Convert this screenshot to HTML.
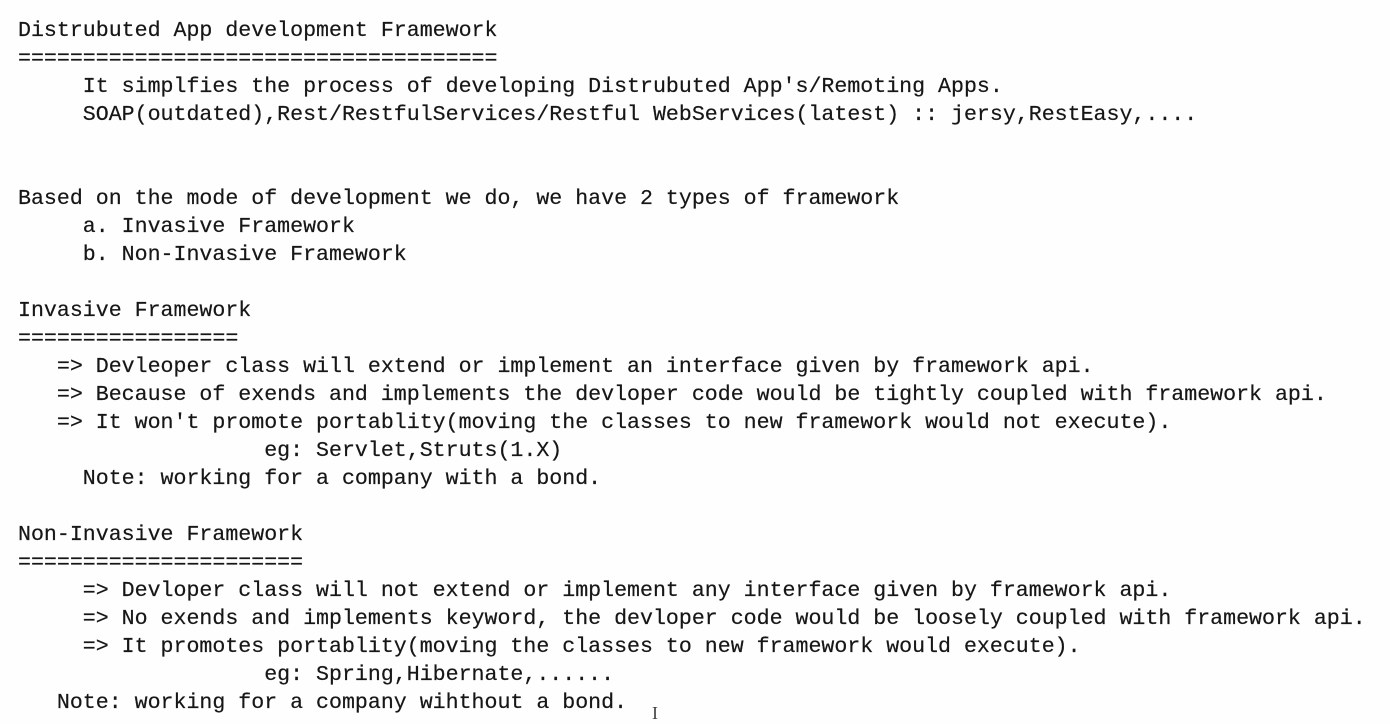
<!DOCTYPE html>
<html><head><style>
html,body{margin:0;padding:0;background:#fefefe;width:1390px;height:724px;overflow:hidden}
pre{margin:0;position:absolute;left:18px;top:17px;font-family:"Liberation Mono",monospace;font-size:21.6px;line-height:28px;color:#161616;white-space:pre;-webkit-text-stroke:0.2px #161616}
.cur{position:absolute;left:652px;top:703px;font-family:"Liberation Serif",serif;font-size:18px;color:#444}
</style></head><body>
<pre>Distrubuted App development Framework
=====================================
     It simplfies the process of developing Distrubuted App's/Remoting Apps.
     SOAP(outdated),Rest/RestfulServices/Restful WebServices(latest) :: jersy,RestEasy,....


Based on the mode of development we do, we have 2 types of framework
     a. Invasive Framework
     b. Non-Invasive Framework

Invasive Framework
=================
   =&gt; Devleoper class will extend or implement an interface given by framework api.
   =&gt; Because of exends and implements the devloper code would be tightly coupled with framework api.
   =&gt; It won't promote portablity(moving the classes to new framework would not execute).
                   eg: Servlet,Struts(1.X)
     Note: working for a company with a bond.

Non-Invasive Framework
======================
     =&gt; Devloper class will not extend or implement any interface given by framework api.
     =&gt; No exends and implements keyword, the devloper code would be loosely coupled with framework api.
     =&gt; It promotes portablity(moving the classes to new framework would execute).
                   eg: Spring,Hibernate,......
   Note: working for a company wihthout a bond.</pre>
<div class="cur">I</div>
</body></html>
